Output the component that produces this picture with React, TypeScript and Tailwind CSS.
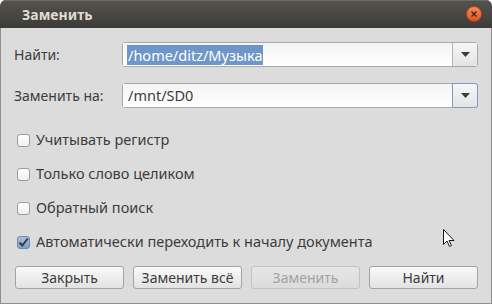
import React from "react";

function Check({ checked, label }: { checked?: boolean; label: string }) {
  return (
    <div className="flex h-[20px] items-center">
      <div
        className={
          checked
            ? "ml-[3px] flex h-[13px] w-[13px] items-center justify-center rounded-[3px] border border-[#6d8bb5] bg-gradient-to-b from-[#a9c1e0] to-[#7f9fca]"
            : "ml-[3px] h-[13px] w-[13px] rounded-[3px] border border-[#9c9c9c] bg-gradient-to-b from-[#ffffff] to-[#f0f0f0]"
        }
      >
        {checked && (
          <svg width="11" height="11" viewBox="0 0 11 11">
            <path d="M1.5 5.5 L4.3 8.5 L9.8 1.5" fill="none" stroke="#3a3a3a" strokeWidth="2" />
          </svg>
        )}
      </div>
      <span className="ml-[6px] text-[14.5px] text-[#3c3c3c]">{label}</span>
    </div>
  );
}

function Combo({ children, focused }: { children: React.ReactNode; focused?: boolean }) {
  return (
    <div className="flex h-[25px] flex-1 rounded-[3px] border border-[#a9a9a9] bg-white">
      <div className="flex flex-1 items-center bg-gradient-to-b from-[#f4f4f4] to-white pl-[4px]">
        {children}
      </div>
      <div
        className={
          focused
            ? "-my-px -mr-px flex w-[26px] items-center justify-center rounded-r-[3px] border border-[#7c9cc8] bg-gradient-to-b from-[#f6f6f6] to-[#e4e4e4]"
            : "flex w-[25px] items-center justify-center border-l border-[#b5b5b5] bg-gradient-to-b from-[#f6f6f6] to-[#e4e4e4]"
        }
      >
        <svg width="9" height="5" viewBox="0 0 9 5">
          <path d="M0 0 H9 L4.5 5 Z" fill="#3c3c3c" />
        </svg>
      </div>
    </div>
  );
}

function Btn({ label, disabled }: { label: string; disabled?: boolean }) {
  return (
    <div
      className={
        disabled
          ? "flex h-[23px] w-[109px] items-center justify-center rounded-[3px] border border-[#c2c2c2] bg-gradient-to-b from-[#e6e6e6] to-[#dcdcdc] text-[14px] text-[#a3a3a3]"
          : "flex h-[23px] w-[109px] items-center justify-center rounded-[3px] border border-[#a3a3a3] bg-gradient-to-b from-[#fafafa] to-[#e2e2e2] text-[14px] text-[#3c3c3c]"
      }
    >
      {label}
    </div>
  );
}

export default function App() {
  return (
    <div
      className="relative flex h-[304px] w-[492px] flex-col overflow-hidden rounded-t-[6px] bg-[#dcdcdc]"
      style={{ fontFamily: '"Noto Sans", "Open Sans", sans-serif' }}
    >
      <div className="flex h-[28px] items-center justify-between bg-gradient-to-b from-[#54534e] to-[#3c3b37] pl-[22px] pr-[10px] shadow-[inset_0_1px_0_#6a6964]">
        <span className="text-[14px] font-bold text-[#dfdbd2]">Заменить</span>
        <div className="flex h-[16px] w-[16px] items-center justify-center rounded-full border border-[#b9441a] bg-gradient-to-b from-[#f48a5c] to-[#e0531f]">
          <svg width="6" height="6" viewBox="0 0 6 6">
            <path d="M0.5 0.5 L5.5 5.5 M5.5 0.5 L0.5 5.5" stroke="#3a2a20" strokeWidth="1.4" />
          </svg>
        </div>
      </div>
      <div className="flex flex-1 flex-col border-x border-b border-[#8f8f8f] px-[13px] pt-[14px]">
        <div className="flex items-center">
          <span className="w-[108px] text-[14px] text-[#3c3c3c]">Найти:</span>
          <Combo>
            <span className="bg-[#6e96c8] px-[1px] text-[14.5px] leading-[20px] text-white">/home/ditz/Музыка</span>
          </Combo>
        </div>
        <div className="mt-[16px] flex items-center">
          <span className="w-[108px] text-[14px] text-[#3c3c3c]">Заменить на:</span>
          <Combo focused>
            <span className="pl-[1px] text-[14.5px] text-[#3c3c3c]">/mnt/SD0</span>
          </Combo>
        </div>
        <div className="mt-[22px] flex flex-col gap-[14px]">
          <Check label="Учитывать регистр" />
          <Check label="Только слово целиком" />
          <Check label="Обратный поиск" />
          <Check checked label="Автоматически переходить к началу документа" />
        </div>
        <div className="mt-[14px] flex justify-between pl-px">
          <Btn label="Закрыть" />
          <Btn label="Заменить всё" />
          <Btn disabled label="Заменить" />
          <Btn label="Найти" />
        </div>
      </div>
      <svg className="absolute left-[443px] top-[229px]" width="13" height="19" viewBox="0 0 13 19">
        <path d="M0.5 0.5 L0.5 15.5 L4 12 L6.5 17.5 L8.5 16.5 L6 11.5 L11 11.5 Z" fill="#ffffff" stroke="#1a1a1a" strokeWidth="1" strokeLinejoin="round" />
      </svg>
    </div>
  );
}
